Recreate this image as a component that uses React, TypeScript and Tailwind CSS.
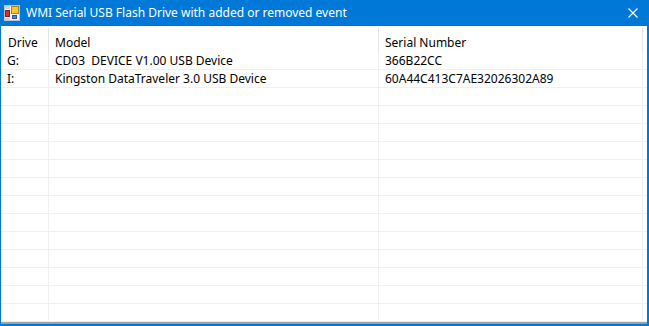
import React from 'react';

const rows = [
  { drive: 'G:', model: 'CD03  DEVICE V1.00 USB Device', serial: '366B22CC' },
  { drive: 'I:', model: 'Kingston DataTraveler 3.0 USB Device', serial: '60A44C413C7AE32026302A89' },
];

const EMPTY_ROWS = 13;

// default WinForms window icon, roughly
function FormIcon() {
  return (
    <svg width="16" height="16" viewBox="0 0 16 16">
      <rect x="0.5" y="0.5" width="15" height="15" fill="#f4f6fa" stroke="#b8c4d6" />
      <rect x="1" y="1" width="5" height="3" fill="#c9d3e3" />
      <rect x="1.5" y="5.5" width="4" height="6" fill="#d8302a" stroke="#8c1c18" />
      <rect x="7.5" y="1.5" width="7" height="7" fill="#f7c52e" stroke="#b5801a" />
      <rect x="8.5" y="10.5" width="4" height="3" fill="#4d86dc" stroke="#2a55a0" />
      <rect x="1" y="13" width="5" height="2" fill="#c9d3e3" />
    </svg>
  );
}

function Cell({ children, line = true }: { children?: React.ReactNode; line?: boolean }) {
  return (
    <div
      className={`h-[18px] px-[6px] leading-[17px] border-b border-[#f0f0f0] whitespace-pre overflow-hidden ${
        line ? 'border-r' : ''
      }`}
    >
      {children}
    </div>
  );
}

export default function App() {
  return (
    <div
      className="w-[649px] h-[326px] flex flex-col bg-[#0078d7] text-[12px] text-black"
      style={{ fontFamily: '"Segoe UI", "Noto Sans", "Open Sans", sans-serif' }}
    >
      <div className="h-[26px] flex items-center pl-[4px] text-white shrink-0">
        <FormIcon />
        <span className="ml-[6px] text-[12px] leading-none">WMI Serial USB Flash Drive with added or removed event</span>
        <svg className="ml-auto mr-[11px]" width="10" height="10" viewBox="0 0 10 10">
          <path d="M0.5 0.5 L9.5 9.5 M9.5 0.5 L0.5 9.5" stroke="white" strokeWidth="1.1" />
        </svg>
      </div>
      <div className="flex-1 ml-[1px] mr-[2px] mb-[2px] bg-white flex flex-col border-b-2 border-[#a0a0a0] overflow-hidden">
        <div className="grid grid-cols-[48px_330px_264px_1fr] h-[26px] shrink-0">
          <div className="pl-[7px] pt-[6px] mt-[2px] border-r border-[#e5e5e5] leading-[17px]">Drive</div>
          <div className="pl-[6px] pt-[6px] mt-[2px] border-r border-[#e5e5e5] leading-[17px]">Model</div>
          <div className="pl-[6px] pt-[6px] mt-[2px] border-r border-[#e5e5e5] leading-[17px]">Serial Number</div>
          <div />
        </div>
        <div className="grid grid-cols-[48px_330px_264px_1fr]">
          {rows.map((r) => (
            <React.Fragment key={r.drive}>
              <Cell>{r.drive}</Cell>
              <Cell>{r.model}</Cell>
              <Cell>{r.serial}</Cell>
              <Cell line={false} />
            </React.Fragment>
          ))}
          {Array.from({ length: EMPTY_ROWS }).map((_, i) => (
            <React.Fragment key={i}>
              <Cell />
              <Cell />
              <Cell />
              <Cell line={false} />
            </React.Fragment>
          ))}
        </div>
      </div>
    </div>
  );
}
